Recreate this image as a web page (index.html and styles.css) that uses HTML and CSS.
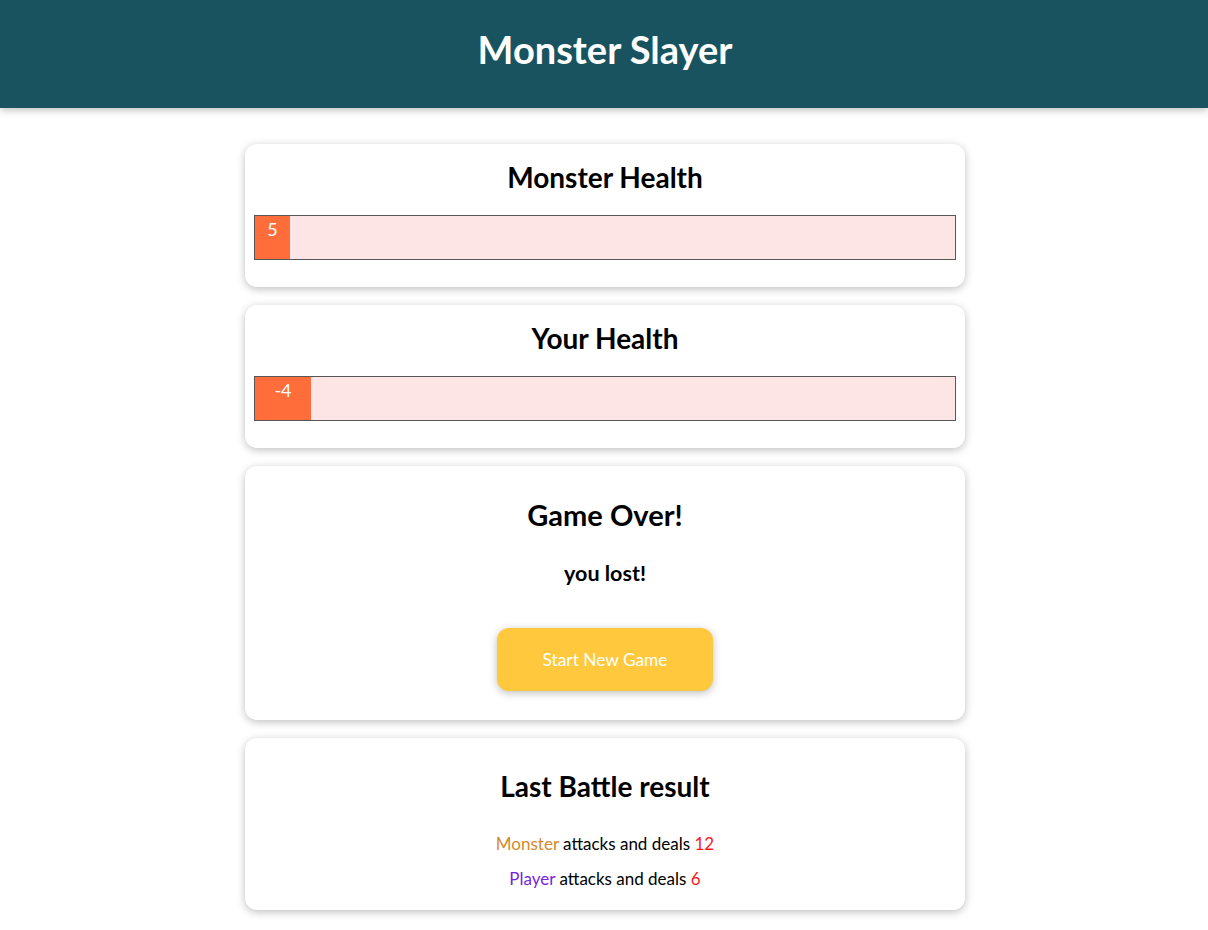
FILE: index.html
```html
<!DOCTYPE html>
<html lang="en">
<head>
<meta charset="utf-8">
<title>Monster Slayer</title>
<link rel="stylesheet" href="styles.css">
</head>
<body>
<header class="top">
  <h1 class="title">Monster Slayer</h1>
</header>
<main class="game">
  <section class="card card-health">
    <h2 class="card-title">Monster Health</h2>
    <div class="healthbar">
      <div class="healthbar-value" style="width: 5%">5</div>
    </div>
  </section>
  <section class="card card-health">
    <h2 class="card-title">Your Health</h2>
    <div class="healthbar">
      <div class="healthbar-value" style="width: 8%">-4</div>
    </div>
  </section>
  <section class="card card-over">
    <h2 class="card-title">Game Over!</h2>
    <h3 class="result">you lost!</h3>
    <button class="btn">Start New Game</button>
  </section>
  <section class="card card-log">
    <h2 class="card-title">Last Battle result</h2>
    <ul class="log">
      <li class="log-item"><span class="who-monster">Monster</span> attacks and deals <span class="dmg">12</span></li>
      <li class="log-item"><span class="who-player">Player</span> attacks and deals <span class="dmg">6</span></li>
    </ul>
  </section>
</main>
</body>
</html>
```

FILE: styles.css
```css
* { box-sizing: border-box; }
html { font-family: "Lato", "Open Sans", sans-serif; font-size: 18px; }
body { margin: 0; background: #fff; color: #000; }

.top {
  height: 108px;
  background: #18535f;
  color: #fff;
  display: flex;
  align-items: flex-start;
  justify-content: center;
  padding: 29px 0 0 2px;
  box-shadow: 0 2px 8px rgba(0,0,0,0.26);
  margin-bottom: 36px;
}
.title { margin: 0; font-size: 38px; font-weight: 700; line-height: 40px; }

.game {
  width: 720px;
  margin: 0 0 0 calc(50% - 359px);
  display: flex;
  flex-direction: column;
  gap: 18px;
  padding-bottom: 20px;
}
.card {
  box-shadow: 0 2px 8px rgba(0,0,0,0.26);
  border-radius: 12px;
  padding: 9px;
  text-align: center;
  display: flex;
  flex-direction: column;
  align-items: stretch;
}
.card-title { margin: 6px 0 0; font-size: 28px; font-weight: 700; line-height: 36px; }
.card-health { height: 143px; }
.healthbar {
  margin-top: 20px;
  height: 45px;
  border: 1px solid #575757;
  background: #fde5e5;
  display: flex;
}
.healthbar-value {
  background: #ff6d3b;
  color: #fff;
  height: 100%;
  font-size: 18px;
  line-height: 26px;
  text-align: center;
}

.card-over { height: 254px; align-items: center; padding-top: 25px; }
.card-over .card-title { font-size: 29px; }
.result { margin: 26px 0 0; font-size: 21.5px; font-weight: 700; line-height: 28px; }
.btn {
  margin-top: 41px;
  width: 216px;
  height: 63px;
  border: none;
  border-radius: 12px;
  background: #ffc83d;
  color: #fff;
  font: inherit;
  font-size: 17.3px;
  box-shadow: 0 2px 8px rgba(0,0,0,0.26);
}

.card-log { height: 172px; padding-top: 24px; }
.log { list-style: none; margin: 27px 0 0; padding: 0; display: flex; flex-direction: column; gap: 9px; }
.log-item { font-size: 17px; line-height: 26px; }
.who-monster { color: #d4892a; }
.who-player { color: #7a1fe0; }
.dmg { color: #ff1a1a; }
```
